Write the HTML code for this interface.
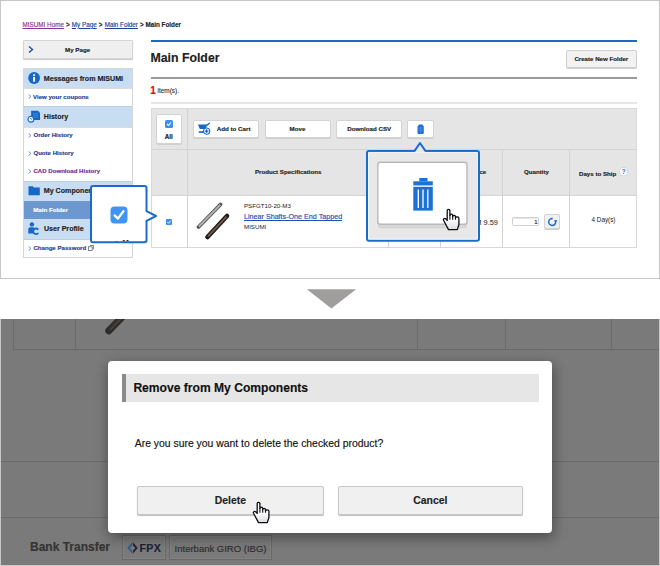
<!DOCTYPE html>
<html><head><meta charset="utf-8">
<style>
*{box-sizing:border-box;margin:0;padding:0}
html,body{width:660px;height:566px;overflow:hidden;background:#fff;font-family:"Liberation Sans",sans-serif;color:#222}
.a{position:absolute}
.t{position:absolute;white-space:nowrap;line-height:1;-webkit-text-stroke:0.15px currentColor}
.b{font-weight:bold}
#top{left:0;top:0;width:660px;height:279px;border:1px solid #c6c6c6}
#bot{left:0;top:319px;width:660px;height:247px;background:#7a7a7a;overflow:hidden}
.lnk{color:#1b3f9a;text-decoration:underline}
.sbh{position:absolute;left:23px;width:110px;background:#c8ddf2;border-top:1px solid #b9cfe6}
.sbr{position:absolute;left:23px;width:110px;background:#fff;border-top:1px solid #dcdcdc}
.sbtxt{-webkit-text-stroke:0.15px currentColor;position:absolute;font-weight:bold;font-size:7.1px;line-height:1;white-space:nowrap;color:#222}
.rtxt{-webkit-text-stroke:0.15px currentColor;position:absolute;font-weight:bold;font-size:6.1px;line-height:1;white-space:nowrap;color:#1b3f9a}
.chev{position:absolute;font-size:6px;color:#1b3f9a;font-weight:normal}
.btn{position:absolute;background:#fff;border:1px solid #d3d3d3;border-radius:2px;box-shadow:0 1px 0 #cfcfcf}
.btxt{-webkit-text-stroke:0.15px currentColor;position:absolute;font-weight:bold;font-size:6.2px;line-height:1;white-space:nowrap;color:#222}
</style></head><body>

<!-- TOP PANEL -->
<div id="top" class="a"></div>

<!-- breadcrumb -->
<div class="t" style="left:22.6px;top:21.8px;font-size:6.3px;color:#222">
<span style="color:#7b3a96;text-decoration:underline">MISUMI Home</span><b style="margin:0 0.4px"> &gt; </b><span class="lnk">My Page</span><b style="margin:0 0.4px"> &gt; </b><span class="lnk">Main Folder</span><b style="margin-left:0.4px"> &gt; </b><b>Main Folder</b>
</div>

<!-- sidebar: My Page -->
<div class="a" style="left:23px;top:40px;width:110px;height:19px;background:#efefef;border:1px solid #d4d4d4;border-radius:1px;box-shadow:0 1px 1px #c8c8c8"></div>
<svg class="a" style="left:27px;top:45px" width="8" height="10"><path d="M2 1.5 L5.5 4.5 L2 7.5" fill="none" stroke="#1a4ba8" stroke-width="1.4"/></svg>
<div class="sbtxt" style="left:65px;top:46.5px;font-size:6.2px">My Page</div>

<!-- sidebar list -->
<div class="a" style="left:23px;top:68px;width:110px;height:189px;background:#fff"></div>
<div class="sbh" style="top:68px;height:20px"></div>
<svg class="a" style="left:27.5px;top:72px" width="13" height="13"><circle cx="6.1" cy="6" r="5.9" fill="#1767c6"/><rect x="5.15" y="4.9" width="1.9" height="4.8" fill="#fff"/><circle cx="6.1" cy="3.1" r="1.05" fill="#fff"/></svg>
<div class="sbtxt" style="left:43.8px;top:75.6px">Messages from MISUMI</div>

<div class="sbr" style="top:88px;height:18px"></div>
<svg class="a chv" style="left:27.5px;top:94px" width="4" height="5"><path d="M0.6 0.5 L3 2.5 L0.6 4.5" fill="none" stroke="#4d79c7" stroke-width="0.8"/></svg>
<div class="rtxt" style="left:33px;top:93.5px">View your coupons</div>

<div class="sbh" style="top:106px;height:20.5px"></div>
<svg class="a" style="left:26px;top:108px" width="15" height="16"><path d="M5.1 2.8 H12 L14 4.8 V11.9 H5.1 Z" fill="#1767c6"/><path d="M7 5.6 H12 M7 7.4 H12 M7 9.2 H12" stroke="#4f92dc" stroke-width="0.7"/><circle cx="4.9" cy="11.2" r="2.9" fill="#fff" stroke="#1a6ccc" stroke-width="1.2"/><path d="M4.3 10 L5 11.3 L6.4 10.7" fill="none" stroke="#1a6ccc" stroke-width="0.8"/></svg>
<div class="sbtxt" style="left:43.8px;top:113.6px">History</div>

<div class="sbr" style="top:126.5px;height:54.5px"></div>
<svg class="a chv" style="left:27.5px;top:132.5px" width="4" height="5"><path d="M0.6 0.5 L3 2.5 L0.6 4.5" fill="none" stroke="#4d79c7" stroke-width="0.8"/></svg>
<div class="rtxt" style="left:33.4px;top:131.5px">Order History</div>
<svg class="a chv" style="left:27.5px;top:150.5px" width="4" height="5"><path d="M0.6 0.5 L3 2.5 L0.6 4.5" fill="none" stroke="#4d79c7" stroke-width="0.8"/></svg>
<div class="rtxt" style="left:33.4px;top:149.5px">Quote History</div>
<svg class="a chv" style="left:27.5px;top:168.5px" width="4" height="5"><path d="M0.6 0.5 L3 2.5 L0.6 4.5" fill="none" stroke="#4d79c7" stroke-width="0.8"/></svg>
<div class="rtxt" style="left:33.4px;top:167.5px;color:#7a2b90">CAD Download History</div>

<div class="sbh" style="top:181px;height:20px"></div>
<svg class="a" style="left:27.5px;top:185px" width="13" height="11"><path d="M0.5 1.2 H4.8 L5.8 2.6 H11.8 V10.2 H0.5 Z" fill="#1767c6"/></svg>
<div class="sbtxt" style="left:43.8px;top:187.5px">My Components</div>

<div class="a" style="left:23px;top:200.7px;width:110px;height:18.3px;background:#6d98cf"></div>
<div class="sbtxt" style="left:33.2px;top:206.5px;color:#fff;font-size:6.2px">Main Folder</div>

<div class="sbh" style="top:219px;height:20px;border-top:none"></div>
<svg class="a" style="left:27px;top:221px" width="13" height="16"><circle cx="4.9" cy="3.4" r="2.2" fill="#1767c6"/><path d="M1.3 12.5 V8 Q1.3 6.3 3 6.3 H6.8 V12.5 Z" fill="#1767c6"/><path d="M11.3 8.6 A2.8 2.8 0 1 0 11.3 12" fill="none" stroke="#1767c6" stroke-width="1.8"/></svg>
<div class="sbtxt" style="left:43.9px;top:225.5px">User Profile</div>

<div class="sbr" style="top:239px;height:17.5px;border-top:1px solid #b9cfe6"></div>
<svg class="a chv" style="left:27.5px;top:245.5px" width="4" height="5"><path d="M0.6 0.5 L3 2.5 L0.6 4.5" fill="none" stroke="#4d79c7" stroke-width="0.8"/></svg>
<div class="rtxt" style="left:33.4px;top:244.5px">Change Password</div>
<svg class="a" style="left:88px;top:244.8px" width="6" height="6"><rect x="0.5" y="1.8" width="3.7" height="3.7" fill="none" stroke="#555" stroke-width="0.7"/><path d="M1.8 0.5 H5.5 V4.2" fill="none" stroke="#555" stroke-width="0.7"/></svg>
<div class="a" style="left:22.5px;top:68px;width:110.5px;height:189.5px;border:1px solid #d6d6d6"></div>

<!-- MAIN CONTENT -->
<div class="a" style="left:150.5px;top:40.2px;width:486px;height:1.7px;background:#1b68c9"></div>
<div class="t b" style="left:150.5px;top:51.5px;font-size:12.3px;color:#1d1d1d">Main Folder</div>
<div class="btn" style="left:565.5px;top:50px;width:71px;height:18.3px;background:#f2f2f2;border-color:#cfcfcf"></div>
<div class="btxt" style="left:574.4px;top:55.7px;font-size:6.14px">Create New Folder</div>
<div class="a" style="left:150.5px;top:77px;width:486px;height:1.5px;background:#9a9a9a"></div>
<div class="t b" style="left:150.2px;top:86px;font-size:10px;color:#d10f0f">1</div>
<div class="t" style="-webkit-text-stroke:0.1px currentColor;left:157.5px;top:88.2px;font-size:6.45px;color:#2a2a2a">item(s).</div>
<div class="a" style="left:150.5px;top:102px;width:486px;height:2px;background:#e6e6e6"></div>

<!-- table -->
<div class="a" style="left:150.5px;top:108px;width:486px;height:140px;background:#fff;border:1px solid #d9d9d9"></div>
<div class="a" style="left:151.5px;top:109px;width:484px;height:86.5px;background:#e5e5e5"></div>
<div class="a" style="left:151.5px;top:149px;width:484px;height:1px;background:#d3d3d3"></div>
<div class="a" style="left:151.5px;top:195px;width:484px;height:1px;background:#d3d3d3"></div>
<div class="a" style="left:187px;top:109px;width:1px;height:139px;background:#d3d3d3"></div>
<div class="a" style="left:388px;top:150px;width:1px;height:98px;background:#d3d3d3"></div>
<div class="a" style="left:440px;top:150px;width:1px;height:98px;background:#d3d3d3"></div>
<div class="a" style="left:502px;top:150px;width:1px;height:98px;background:#d3d3d3"></div>
<div class="a" style="left:569px;top:150px;width:1px;height:98px;background:#d3d3d3"></div>

<!-- All box -->
<div class="btn" style="left:156.3px;top:114.2px;width:25.6px;height:30px;border-radius:2px"></div>
<div class="a" style="left:165px;top:120.4px;width:8px;height:7.5px;background:#3d8ef0;border-radius:1.5px"></div>
<svg class="a" style="left:165px;top:120.4px" width="8" height="8"><path d="M2 4 L3.5 5.5 L6 2.5" fill="none" stroke="#fff" stroke-width="1.1"/></svg>
<div class="btxt" style="left:164.8px;top:134px;font-size:6.3px">All</div>

<!-- toolbar buttons -->
<div class="btn" style="left:192.6px;top:120px;width:66.6px;height:18.2px"></div>
<svg class="a" style="left:197px;top:122px" width="16" height="14"><path d="M1 2.6 H10.2 L8.6 6.9 H2.8 Z" fill="#1767c6"/><path d="M9.6 3.5 L12.3 1.3" stroke="#1767c6" stroke-width="1.4" stroke-linecap="round"/><rect x="1.8" y="9.2" width="5.5" height="1.7" fill="#1767c6"/><circle cx="9.6" cy="9.1" r="3.1" fill="#fff" stroke="#1767c6" stroke-width="1.1"/><path d="M9.6 7.3 V10.9 M7.8 9.1 H11.4" stroke="#1767c6" stroke-width="1.2"/></svg>
<div class="btxt" style="left:216.8px;top:126px">Add to Cart</div>
<div class="btn" style="left:264.5px;top:120px;width:66px;height:17.5px"></div>
<div class="btxt" style="left:289.5px;top:126px">Move</div>
<div class="btn" style="left:335.7px;top:120px;width:66.8px;height:17.5px"></div>
<div class="btxt" style="left:347.2px;top:126px">Download CSV</div>
<div class="btn" style="left:407.2px;top:120px;width:26.5px;height:17.5px"></div>
<svg class="a" style="left:416px;top:123px" width="10" height="13"><rect x="2.6" y="1.4" width="4.2" height="1.6" rx="0.8" fill="#1767c6"/><rect x="1.5" y="2.6" width="6.3" height="8.4" rx="1.2" fill="#1a6fd6"/><path d="M1.8 5 H7.5 M1.8 7.3 H7.5 M4.65 3.5 V10.5" stroke="#5a9ae6" stroke-width="0.6"/></svg>

<!-- table header text -->
<div class="btxt" style="left:254.9px;top:169px;font-size:6.15px">Product Specifications</div>
<div class="btxt" style="left:524px;top:169.2px;font-size:6.15px">Quantity</div>
<div class="btxt" style="left:579px;top:171px;font-size:6.15px">Days to Ship</div>
<svg class="a" style="left:618.5px;top:167px" width="10" height="10"><circle cx="4.7" cy="4.7" r="4.1" fill="#fff" stroke="#c4c9d2" stroke-width="0.8"/><text x="4.75" y="7.1" font-size="6.4" font-weight="bold" text-anchor="middle" fill="#1d63c4" font-family="Liberation Sans">?</text></svg>
<div class="btxt" style="left:457.6px;top:169px;font-size:6.15px">Unit Price</div>

<!-- row -->
<div class="a" style="left:166px;top:219px;width:6px;height:6px;background:#3d8ef0;border-radius:1px"></div>
<svg class="a" style="left:166px;top:219px" width="6" height="6"><path d="M1.3 3 L2.6 4.3 L4.8 1.6" fill="none" stroke="#fff" stroke-width="0.9"/></svg>
<svg class="a" style="left:193px;top:200px" width="42" height="46">
<path d="M5.5 27 L27.5 4.5" stroke="#555" stroke-width="3.8" stroke-linecap="round"/>
<path d="M5.8 26.5 L27.2 4.8" stroke="#b5b5b5" stroke-width="1.8"/>
<path d="M14.5 37 L34 16" stroke="#1f1c19" stroke-width="4.6" stroke-linecap="round"/>
<path d="M15 36.3 L33.5 16.6" stroke="#6e5e4c" stroke-width="1.8"/>
</svg>
<div class="t" style="-webkit-text-stroke:0;left:244px;top:202.5px;font-size:6.17px;color:#222">PSFGT10-20-M3</div>
<div class="t lnk" style="left:244px;top:214.2px;font-size:7.17px;color:#1f4db8">Linear Shafts-One End Tapped</div>
<div class="t" style="-webkit-text-stroke:0;left:244px;top:224px;font-size:6.17px;color:#222">MISUMI</div>
<div class="t" style="-webkit-text-stroke:0;left:470px;top:218.8px;font-size:7.4px;color:#222">RM 9.59</div>
<div class="a" style="left:512.4px;top:216.8px;width:26.6px;height:9.7px;border:1px solid #cfcfcf;border-radius:1.5px;background:#fff;box-shadow:inset 0 1px 0 #e8e8e8"></div>
<div class="t" style="left:534.2px;top:218.8px;font-size:6px;color:#222">1</div>
<div class="btn" style="left:544.4px;top:214.2px;width:15.2px;height:15.3px;background:#f0f0f0;border-color:#d2d2d2"></div>
<svg class="a" style="left:547px;top:217px" width="11" height="11"><path d="M5.7 1.5 A3.5 3.5 0 1 0 8.6 4.2" fill="none" stroke="#1767c6" stroke-width="1.4"/><path d="M7 3.2 L10.2 3 L8.7 6 Z" fill="#1767c6"/></svg>
<div class="t" style="-webkit-text-stroke:0;left:591.6px;top:216.5px;font-size:6.3px;color:#222">4 Day(s)</div>

<!-- popup 1 (checkbox) -->
<svg class="a" style="left:88px;top:183px" width="72" height="64">
<defs><clipPath id="cp1"><rect x="3.5" y="3.5" width="55" height="55"/></clipPath></defs>
<path d="M5 3.1 H56.5 Q58.5 3.1 58.5 5.1 V28.2 L68 33 L58.5 37.8 V57.2 Q58.5 59.2 56.5 59.2 H5 Q3 59.2 3 57.2 V5.1 Q3 3.1 5 3.1 Z" fill="#fff"/>
<text x="23.6" y="68" font-family="Liberation Sans" font-weight="bold" font-size="14" fill="#333" clip-path="url(#cp1)">All</text>
<path d="M5 3.1 H56.5 Q58.5 3.1 58.5 5.1 V28.2 L68 33 L58.5 37.8 V57.2 Q58.5 59.2 56.5 59.2 H5 Q3 59.2 3 57.2 V5.1 Q3 3.1 5 3.1 Z" fill="none" stroke="#1a6ccc" stroke-width="2" stroke-linejoin="round"/>
<rect x="22.5" y="23.4" width="17" height="17" rx="4" fill="#3f95f5"/>
<path d="M26.6 32.4 L29.9 35.6 L35.4 28.2" fill="none" stroke="#fff" stroke-width="2.3" stroke-linecap="round" stroke-linejoin="round"/>
</svg>

<!-- popup 2 (trash) -->
<svg class="a" style="left:364px;top:139px" width="119" height="106">
<path d="M5 11.9 H50.6 L56 4 L61.4 11.9 H113 Q115 11.9 115 13.9 V99.7 Q115 101.7 113 101.7 H5 Q3 101.7 3 99.7 V13.9 Q3 11.9 5 11.9 Z" fill="#e8e8e8" stroke="#1a6ccc" stroke-width="2" stroke-linejoin="round"/>
<path d="M4.6 13.4 H113.4 V100.2 H4.6 Z" fill="none" stroke="#fff" stroke-width="0.8" opacity="0.7"/>
<rect x="14" y="26" width="89" height="63.5" rx="2.5" fill="#d6d6d6"/>
<rect x="13.8" y="23.3" width="89.2" height="62" rx="2.5" fill="#fff" stroke="#b9b9b9" stroke-width="1.4"/>
<rect x="55.3" y="39" width="8.2" height="3.3" fill="#1b71d8"/>
<rect x="49.3" y="42.3" width="19.5" height="4.1" fill="#1b71d8"/>
<rect x="49.3" y="47.8" width="19.5" height="23.8" fill="#1b71d8"/>
<path d="M54.3 50.5 V69 M59 50.5 V69 M63.8 50.5 V69" stroke="#fff" stroke-width="1.3"/>
</svg>
<!-- hand cursor 1 -->
<svg class="a" style="left:441.5px;top:206.5px" width="20" height="24" viewBox="0 0 20 24">
<defs><linearGradient id="hg313" x1="0" y1="0" x2="0" y2="1"><stop offset="0.45" stop-color="#fff"/><stop offset="1" stop-color="#dcdcdc"/></linearGradient></defs>
<path d="M5.2 14 V3.6 C5.2 1.9 7.9 1.9 7.9 3.6 V8.3 C8.1 6.8 10.6 6.8 10.7 8.5 V9.3 C10.9 7.9 13.4 8 13.5 9.6 V10.8 C13.8 9.4 16.8 9.5 16.9 11.2 V17.8 L15.3 22.6 H6.5 L1.5 13.3 C0.9 12 2.4 10.8 3.6 11.8 L5.2 13.2" fill="url(#hg313)" stroke="#0d0d18" stroke-width="1.3" stroke-linejoin="round"/>
<path d="M7.9 8 V12.8 M10.7 8.8 V12.8 M13.5 10 V12.8" stroke="#0d0d18" stroke-width="1.1"/>
</svg>

<!-- arrow between -->
<svg class="a" style="left:300px;top:285px" width="64" height="28"><path d="M6.9 4.2 H56.1 L31.4 23.5 Z" fill="#a09e9d"/></svg>

<!-- BOTTOM PANEL -->
<div id="bot" class="a">
  <div class="a" style="left:13px;top:-5px;width:1px;height:34.5px;background:#6a6a6a"></div>
  <div class="a" style="left:13px;top:29.6px;width:660px;height:1px;background:#6a6a6a"></div>
  <div class="a" style="left:75px;top:-5px;width:1px;height:34.5px;background:#6a6a6a"></div>
  <div class="a" style="left:417px;top:-5px;width:1px;height:34.5px;background:#6a6a6a"></div>
  <div class="a" style="left:505px;top:-5px;width:1px;height:34.5px;background:#6a6a6a"></div>
  <div class="a" style="left:611px;top:-5px;width:1px;height:34.5px;background:#6a6a6a"></div>
  <svg class="a" style="left:95px;top:-8px" width="40" height="30"><path d="M13.8 19.8 L32.1 1" stroke="#2c2c2c" stroke-width="7" stroke-linecap="round"/><path d="M14.3 19.1 L31.6 1.5" stroke="#3d342d" stroke-width="3.4"/><path d="M15.5 18.6 L31.5 2.2" stroke="#5a4a3c" stroke-width="0.8"/></svg>
  <div class="a" style="left:0;top:142px;width:660px;height:1px;background:#6a6a6a"></div>
  <div class="a" style="left:0;top:197.5px;width:660px;height:1px;background:#6a6a6a"></div>
  <div class="t b" style="left:30px;top:222px;font-size:12px;color:#333">Bank Transfer</div>
  <div class="a" style="left:122.4px;top:216.4px;width:43.2px;height:25px;border:1px solid #686868;box-shadow:inset 0 0 0 1px #828282"></div>
  <svg class="a" style="left:126px;top:222px" width="13" height="14"><path d="M6.2 1.2 L1.2 7 L6.2 12.6 L6.2 9.8 L3.8 7 L6.2 4.2 Z" fill="#2e5d8e"/><path d="M6.9 1.2 L11.8 7 L6.9 12.6 L6.9 9.8 L9.3 7 L6.9 4.2 Z" fill="#1c2438"/></svg>
  <div class="t b" style="left:139.6px;top:224.2px;font-size:10.6px;letter-spacing:0.25px;color:#1c2236">FPX</div>
  <div class="a" style="left:169.4px;top:215.9px;width:102.2px;height:25.6px;border:1px solid #686868;box-shadow:inset 0 0 0 1px #828282"></div>
  <div class="t" style="left:174.6px;top:225px;font-size:9.5px;color:#2e2e2e">Interbank GIRO (IBG)</div>
</div>

<div class="a" style="left:0;top:319px;width:1.2px;height:247px;background:#c8c8c8"></div>
<div class="a" style="left:658.8px;top:319px;width:1.2px;height:247px;background:#c8c8c8"></div>
<div class="a" style="left:0;top:564.6px;width:660px;height:1.4px;background:#c8c8c8"></div>
<!-- modal -->
<div class="a" style="left:108.2px;top:361px;width:443.8px;height:171.7px;background:#fff;border-radius:4px;box-shadow:1px 4px 14px rgba(0,0,0,0.42)"></div>
<div class="a" style="left:121.6px;top:374.2px;width:417.3px;height:27.4px;background:#e6e6e6;border-left:4.2px solid #8a8a8a"></div>
<div class="t b" style="left:133.4px;top:382px;font-size:12.1px;color:#111">Remove from My Components</div>
<div class="t" style="left:134.8px;top:439.4px;font-size:10.4px;color:#111">Are you sure you want to delete the checked product?</div>
<div class="a" style="left:137.2px;top:485.6px;width:186.8px;height:29.7px;background:#f0f0f0;border:1px solid #c8c8c8;border-radius:2px;box-shadow:0 1px 1px #bdbdbd"></div>
<div class="t b" style="left:214.8px;top:496px;font-size:10.4px;color:#222">Delete</div>
<div class="a" style="left:337.6px;top:485.6px;width:185.7px;height:29.7px;background:#f0f0f0;border:1px solid #c8c8c8;border-radius:2px;box-shadow:0 1px 1px #bdbdbd"></div>
<div class="t b" style="left:413.3px;top:496px;font-size:10.4px;color:#222">Cancel</div>
<!-- hand cursor 2 -->
<svg class="a" style="left:252px;top:500px" width="20" height="24" viewBox="0 0 20 24">
<defs><linearGradient id="hg869" x1="0" y1="0" x2="0" y2="1"><stop offset="0.45" stop-color="#fff"/><stop offset="1" stop-color="#dcdcdc"/></linearGradient></defs>
<path d="M5.2 14 V3.6 C5.2 1.9 7.9 1.9 7.9 3.6 V8.3 C8.1 6.8 10.6 6.8 10.7 8.5 V9.3 C10.9 7.9 13.4 8 13.5 9.6 V10.8 C13.8 9.4 16.8 9.5 16.9 11.2 V17.8 L15.3 22.6 H6.5 L1.5 13.3 C0.9 12 2.4 10.8 3.6 11.8 L5.2 13.2" fill="url(#hg869)" stroke="#0d0d18" stroke-width="1.3" stroke-linejoin="round"/>
<path d="M7.9 8 V12.8 M10.7 8.8 V12.8 M13.5 10 V12.8" stroke="#0d0d18" stroke-width="1.1"/>
</svg>

</body></html>
